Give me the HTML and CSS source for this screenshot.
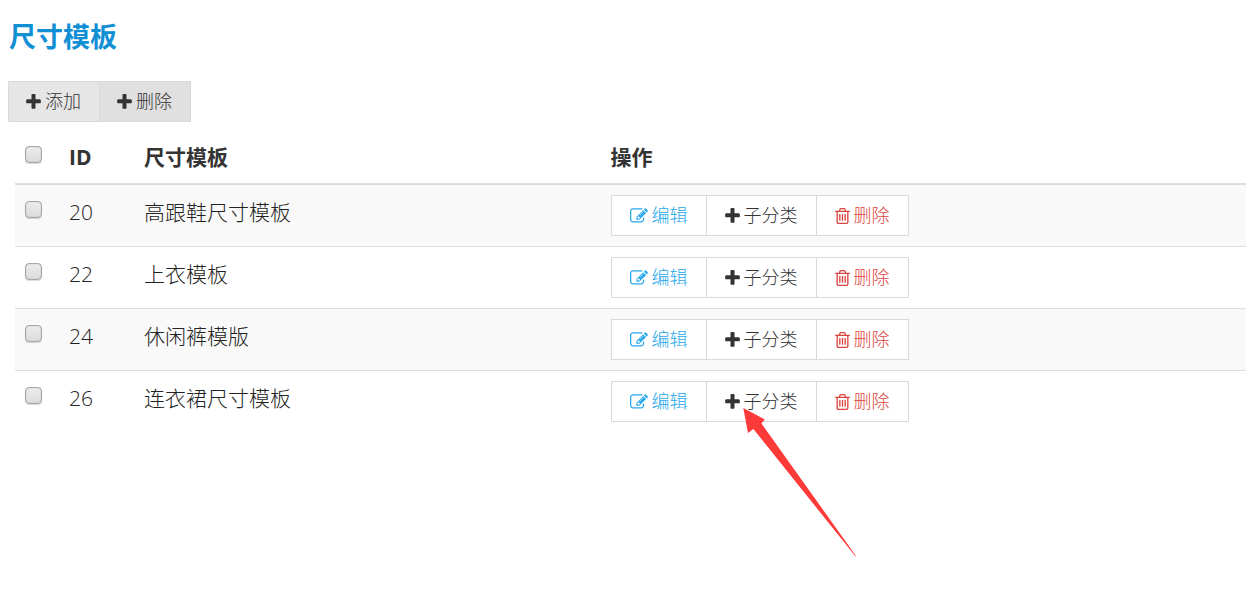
FILE: index.html
```
<!DOCTYPE html>
<html lang="zh-CN">
<head>
  <meta charset="UTF-8">
  <meta name="viewport" content="width=device-width, initial-scale=1.0">
  <title>尺寸模板</title>
  <link rel="stylesheet" href="styles.css">
</head>
<body>

  <!-- Icon definitions -->
  <svg class="sprite" aria-hidden="true">
    <symbol id="icon-plus" viewBox="192 128 1408 1536">
      <path d="M1600 736v192q0 40-28 68t-68 28h-416v416q0 40-28 68t-68 28h-192q-40 0-68-28t-28-68v-416h-416q-40 0-68-28t-28-68v-192q0-40 28-68t68-28h416v-416q0-40 28-68t68-28h192q40 0 68 28t28 68v416h416q40 0 68 28t28 68z"/>
    </symbol>
    <symbol id="icon-edit" viewBox="0 128 1792 1536">
      <path d="M888 1184l116-116-152-152-116 116v56h96v96h56zm440-720q-16-16-33 1l-350 350q-17 17-1 33t33-1l350-350q17-17 1-33zm80 594v190q0 119-84.5 203.5t-203.5 84.5h-832q-119 0-203.5-84.5t-84.5-203.5v-832q0-119 84.5-203.5t203.5-84.5h832q63 0 117 25 15 7 18 23 3 17-9 29l-49 49q-14 14-32 8-23-6-45-6h-832q-66 0-113 47t-47 113v832q0 66 47 113t113 47h832q66 0 113-47t47-113v-126q0-13 9-22l64-64q15-15 35-7t20 29zm-96-738l288 288-672 672h-288v-288zm444 132l-92 92-288-288 92-92q28-28 68-28t68 28l152 152q28 28 28 68t-28 68z"/>
    </symbol>
    <symbol id="icon-trash" viewBox="192 128 1408 1536">
      <path d="M704 736v576q0 14-9 23t-23 9h-64q-14 0-23-9t-9-23v-576q0-14 9-23t23-9h64q14 0 23 9t9 23zm256 0v576q0 14-9 23t-23 9h-64q-14 0-23-9t-9-23v-576q0-14 9-23t23-9h64q14 0 23 9t9 23zm256 0v576q0 14-9 23t-23 9h-64q-14 0-23-9t-9-23v-576q0-14 9-23t23-9h64q14 0 23 9t9 23zm128 724v-948h-896v948q0 22 7 40.5t14.5 27 10.5 8.5h832q3 0 10.5-8.5t14.5-27 7-40.5zm-672-1076h448l-48-117q-7-9-17-11h-317q-10 2-17 11zm928 32v64q0 14-9 23t-23 9h-96v948q0 83-47 143.5t-113 60.5h-832q-66 0-113-58.5t-47-141.5v-952h-96q-14 0-23-9t-9-23v-64q0-14 9-23t23-9h309l70-167q15-37 54-63t79-26h320q40 0 79 26t54 63l70 167h309q14 0 23 9t9 23z"/>
    </symbol>
  </svg>

  <h1 class="page-title">尺寸模板</h1>

  <div class="btn-group toolbar">
    <button type="button" class="btn btn-gray"><svg class="icon"><use href="#icon-plus"/></svg>添加</button>
    <button type="button" class="btn btn-gray active"><svg class="icon"><use href="#icon-plus"/></svg>删除</button>
  </div>

  <div class="table-wrap">
    <table class="table">
      <thead>
        <tr>
          <th class="col-check"><input type="checkbox" class="check" aria-label="全选"></th>
          <th class="col-id">ID</th>
          <th class="col-name">尺寸模板</th>
          <th>操作</th>
        </tr>
      </thead>
      <tbody>
        <tr>
          <td><input type="checkbox" class="check" aria-label="20"></td>
          <td>20</td>
          <td>高跟鞋尺寸模板</td>
          <td>
            <div class="btn-group">
              <button type="button" class="btn btn-edit"><svg class="icon icon-wide"><use href="#icon-edit"/></svg>编辑</button>
              <button type="button" class="btn"><svg class="icon"><use href="#icon-plus"/></svg>子分类</button>
              <button type="button" class="btn btn-delete"><svg class="icon"><use href="#icon-trash"/></svg>删除</button>
            </div>
          </td>
        </tr>
        <tr>
          <td><input type="checkbox" class="check" aria-label="22"></td>
          <td>22</td>
          <td>上衣模板</td>
          <td>
            <div class="btn-group">
              <button type="button" class="btn btn-edit"><svg class="icon icon-wide"><use href="#icon-edit"/></svg>编辑</button>
              <button type="button" class="btn"><svg class="icon"><use href="#icon-plus"/></svg>子分类</button>
              <button type="button" class="btn btn-delete"><svg class="icon"><use href="#icon-trash"/></svg>删除</button>
            </div>
          </td>
        </tr>
        <tr>
          <td><input type="checkbox" class="check" aria-label="24"></td>
          <td>24</td>
          <td>休闲裤模版</td>
          <td>
            <div class="btn-group">
              <button type="button" class="btn btn-edit"><svg class="icon icon-wide"><use href="#icon-edit"/></svg>编辑</button>
              <button type="button" class="btn"><svg class="icon"><use href="#icon-plus"/></svg>子分类</button>
              <button type="button" class="btn btn-delete"><svg class="icon"><use href="#icon-trash"/></svg>删除</button>
            </div>
          </td>
        </tr>
        <tr>
          <td><input type="checkbox" class="check" aria-label="26"></td>
          <td>26</td>
          <td>连衣裙尺寸模板</td>
          <td>
            <div class="btn-group">
              <button type="button" class="btn btn-edit"><svg class="icon icon-wide"><use href="#icon-edit"/></svg>编辑</button>
              <button type="button" class="btn"><svg class="icon"><use href="#icon-plus"/></svg>子分类</button>
              <button type="button" class="btn btn-delete"><svg class="icon"><use href="#icon-trash"/></svg>删除</button>
              <!-- Arrow pointing at the subcategory button -->
              <svg class="arrow" viewBox="0 0 114 149" aria-hidden="true">
                <path d="M0.3 0L21.8 11.4L18.4 15.4L113 148L112.4 148.3L10.4 21L5 25Z"/>
              </svg>
            </div>
          </td>
        </tr>
      </tbody>
    </table>
  </div>

</body>
</html>
```
FILE: styles.css
```
/* General Styles */
* {
  box-sizing: border-box;
}

body {
  margin: 0;
  min-height: 100vh;
  background-color: #fff;
  color: #222;
  font-family: "Open Sans", "Noto Sans CJK SC", sans-serif;
  font-size: 21px;
  font-weight: 300;
  line-height: 35px;
}

.sprite {
  display: none;
}

.page-title {
  margin: 0;
  padding: 17px 9px 24px;
  color: #118fd4;
  font-size: 27px;
  font-weight: 700;
  line-height: 40px;
}

/* Buttons */
.btn-group {
  display: flex;
  position: relative;
}

.toolbar {
  padding: 0 8px;
}

.btn {
  display: flex;
  align-items: center;
  gap: 4px;
  height: 41px;
  padding: 0 18px;
  border: 1px solid #d9d9d9;
  background-color: #fff;
  color: #333;
  font-family: inherit;
  font-size: 18px;
  font-weight: 300;
  line-height: 27px;
  cursor: pointer;
}

.btn + .btn {
  margin-left: -1px;
}

.btn-gray {
  padding: 0 18px 0 17px;
  background-color: #e6e6e6;
}

.btn-gray.active {
  background-color: #e0e0e0;
}

.btn-edit {
  color: #28a8ec;
}

.btn-delete {
  color: #dc443e;
}

.icon {
  width: 15px;
  height: 16px;
  fill: currentColor;
}

.icon-wide {
  width: 18px;
}

/* Table */
.table-wrap {
  padding: 8px 0 0 15px;
}

.table {
  width: 100%;
  table-layout: fixed;
  border-spacing: 0;
}

.table th,
.table td {
  padding: 10px;
  text-align: left;
  vertical-align: top;
}

.table th {
  padding-bottom: 8px;
  border-bottom: 2px solid #ddd;
  color: #333;
  font-weight: 700;
}

.table tr + tr td {
  border-top: 1px solid #ddd;
}

.table tbody tr:nth-child(odd) {
  background-color: #f9f9f9;
}

.col-check {
  width: 44px;
}

.col-id {
  width: 75px;
}

.col-name {
  width: 37.9%;
}

.check {
  appearance: none;
  display: block;
  width: 17px;
  height: 17px;
  margin: 6px 0 0;
  border: 1px solid #a6a6a6;
  border-radius: 4px;
  background: linear-gradient(#ececec, #dcdcdc);
  box-shadow: inset 0 0 1px #999, 0 1px 1px rgba(0, 0, 0, 0.15);
}

.check:checked {
  background: #3bb4f2;
}

.arrow {
  position: absolute;
  top: 27px;
  left: 132px;
  width: 114px;
  height: 149px;
  fill: #fc3a39;
  pointer-events: none;
}
```
